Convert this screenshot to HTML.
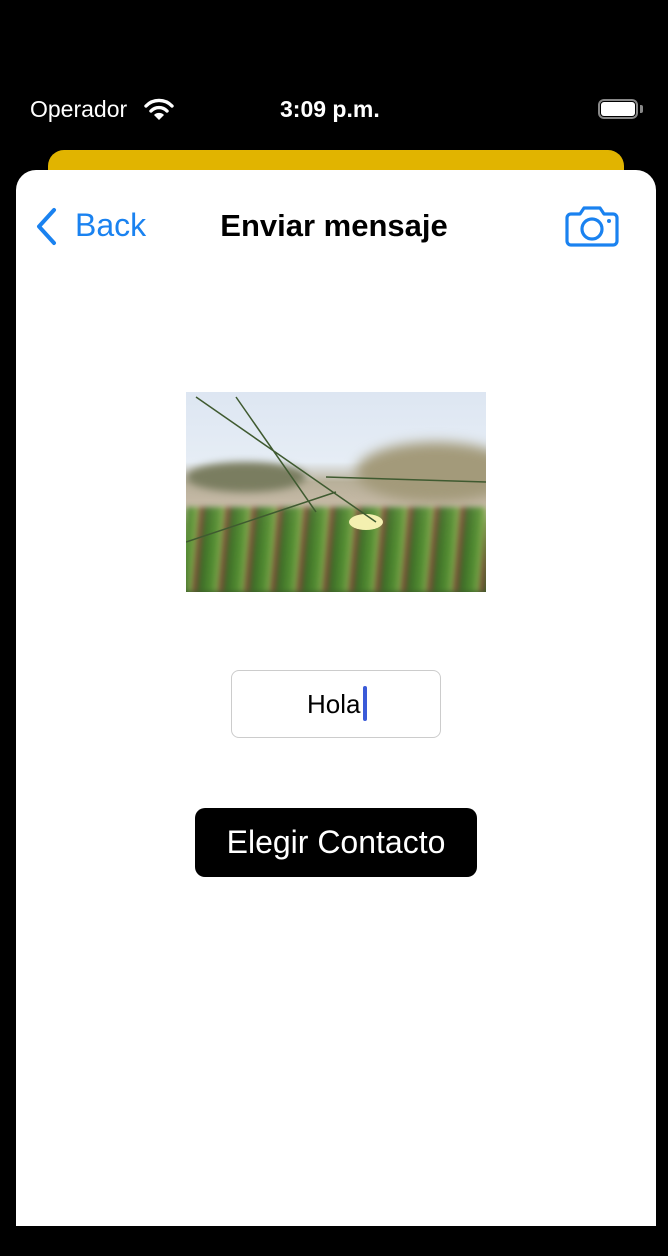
<!DOCTYPE html>
<html><head><meta charset="utf-8"><style>
body{margin:0;width:668px;height:1256px;background:#000;position:relative;overflow:hidden;font-family:"Liberation Sans",sans-serif}
.abs{position:absolute}
</style></head><body>
<div class="abs" style="left:30px;top:96px;color:#fff;font-size:23px">Operador</div>
<svg class="abs" style="left:144px;top:97px" width="30" height="24" viewBox="0 0 30 24"><path d="M2 9 A18 18 0 0 1 28 9" stroke="#fff" stroke-width="3.4" fill="none" stroke-linecap="round"/><path d="M7 14 A11 11 0 0 1 23 14" stroke="#fff" stroke-width="3.4" fill="none" stroke-linecap="round"/><path d="M15 23 L10 18 A7 7 0 0 1 20 18 Z" fill="#fff"/></svg>
<div class="abs" style="left:280px;top:96px;color:#fff;font-size:23px;font-weight:bold">3:09 p.m.</div>
<div class="abs" style="left:598px;top:99px;width:40px;height:20px;border:2px solid #888;border-radius:6px;box-sizing:border-box"></div>
<div class="abs" style="left:601px;top:102px;width:34px;height:14px;background:#fff;border-radius:3px"></div>
<div class="abs" style="left:640px;top:105px;width:3px;height:8px;background:#888;border-radius:0 2px 2px 0"></div>
<div class="abs" style="left:48px;top:150px;width:576px;height:40px;background:#e1b400;border-radius:16px 16px 0 0"></div>
<div class="abs" style="left:16px;top:170px;width:640px;height:1056px;background:#fff;border-radius:20px 20px 0 0"></div>
<svg class="abs" style="left:34px;top:207px" width="24" height="40" viewBox="0 0 24 40"><path d="M20 3 L5 19.5 L20 36" stroke="#1a82f0" stroke-width="4" fill="none" stroke-linecap="round" stroke-linejoin="round"/></svg>
<div class="abs" style="left:75px;top:207px;color:#1a82f0;font-size:32px">Back</div>
<div class="abs" style="left:0;width:668px;top:208px;text-align:center;color:#000;font-size:31px;font-weight:bold">Enviar mensaje</div>
<svg class="abs" style="left:565px;top:205px" width="54" height="42" viewBox="0 0 54 42"><path d="M6 9 H15 L19 3 H35 L39 9 H48 A4 4 0 0 1 52 13 V36 A4 4 0 0 1 48 40 H6 A4 4 0 0 1 2 36 V13 A4 4 0 0 1 6 9 Z" stroke="#1a82f0" stroke-width="3.2" fill="none" stroke-linejoin="round"/><circle cx="27" cy="24" r="10" stroke="#1a82f0" stroke-width="3.2" fill="none"/><circle cx="44" cy="16" r="2" fill="#1a82f0"/></svg>
<div class="abs" style="left:186px;top:392px;width:300px;height:200px;overflow:hidden;background:linear-gradient(180deg,#dde6f2 0%,#e6edf5 35%,#b8b09a 45%,#c8bba8 58%,#8a9a60 66%,#5b8a3a 78%,#3a5a28 100%)">
<div class="abs" style="left:0;top:70px;width:120px;height:30px;background:#7a7d60;border-radius:50%;filter:blur(4px)"></div>
<div class="abs" style="left:170px;top:50px;width:160px;height:60px;background:#a39a7a;border-radius:50%;filter:blur(6px)"></div>
<div class="abs" style="left:0;top:115px;width:300px;height:85px;background:repeating-linear-gradient(95deg,#4f8a30 0 8px,#7aa848 8px 14px,#8a3a3a 14px 18px,#3f7028 18px 26px);filter:blur(3px);opacity:.9"></div>
<div class="abs" style="left:163px;top:122px;width:34px;height:16px;background:#f4f0b0;border-radius:50%"></div>
<svg class="abs" style="left:0;top:0" width="300" height="200"><path d="M10 5 L190 130 M50 5 L130 120 M0 150 L150 100 M140 85 L300 90" stroke="#3f5a30" stroke-width="1.5" fill="none"/></svg>
</div>
<div class="abs" style="left:231px;top:670px;width:210px;height:68px;border:1px solid #ccc;border-radius:8px;box-sizing:border-box"></div>
<div class="abs" style="left:307px;top:689px;font-size:26px;color:#000">Hola</div>
<div class="abs" style="left:363px;top:686px;width:4px;height:35px;background:#3a5ad8;border-radius:2px"></div>
<div class="abs" style="left:195px;top:808px;width:282px;height:69px;background:#000;border-radius:10px;color:#fff;font-size:32px;text-align:center;line-height:69px">Elegir Contacto</div>
</body></html>
